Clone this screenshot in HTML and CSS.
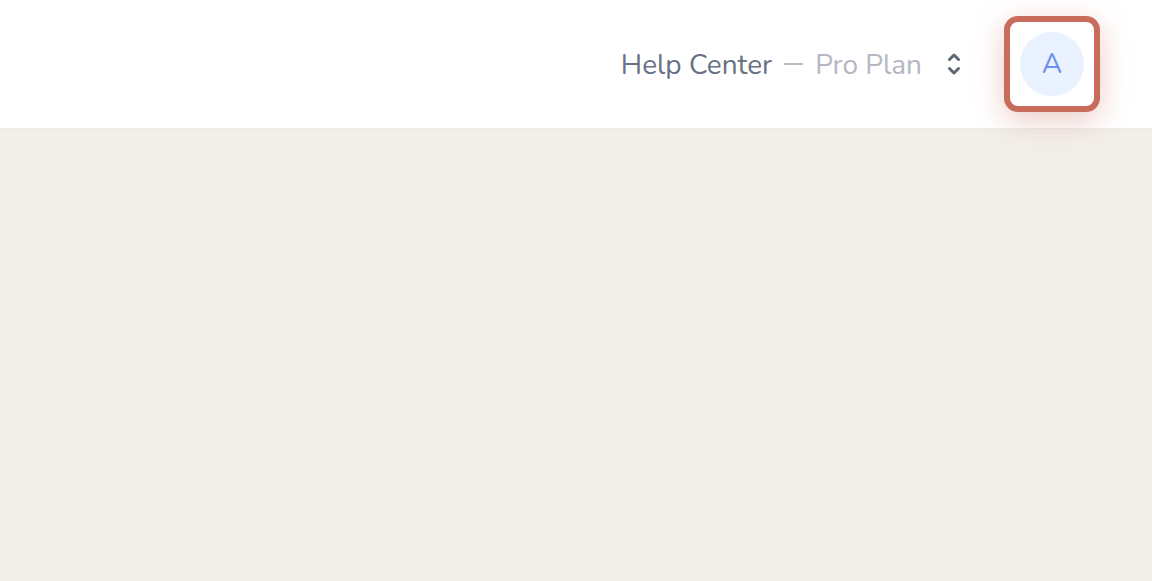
FILE: index.html
```html
<!DOCTYPE html>
<html>
<head>
    <meta charset="utf-8">
    <meta name="viewport" content="width=device-width, initial-scale=1">
    <title>Workspace</title>
    <link rel="stylesheet" href="styles.css">
</head>
<body>
    <header class="topbar">
        <div class="topdiv">
            <div class="workspace">
                <span class="ws-name">Help Center</span>
                <span class="ws-dash"></span>
                <span class="ws-plan">Pro Plan</span>
                <svg class="ws-switch" width="16" height="26" viewBox="0 0 16 26" fill="none" stroke="#5f6675" stroke-width="3" stroke-linecap="round" stroke-linejoin="round">
                    <path d="M3.5 8.5 L8 4 L12.5 8.5"/>
                    <path d="M3.5 17.5 L8 22 L12.5 17.5"/>
                </svg>
            </div>
            <button class="avatar-btn">
                <span class="avatar">A</span>
            </button>
        </div>
    </header>

    <!-- main content -->
    <div class="content"></div>
</body>
</html>
```

FILE: styles.css
```css
* {
    box-sizing: border-box;
}
html, body {
    height: 100%;
}
body {
    margin: 0;
    background: #f2efe8;
    font-family: "Nunito", "Lato", "Noto Sans", sans-serif;
}
.topbar {
    background: white;
    height: 129px;
    border-bottom: 1px solid #e9ecef;
    padding-right: 52px;
}
.topdiv {
    display: flex;
    align-items: center;
    justify-content: flex-end;
    height: 128px;
}
.workspace {
    display: flex;
    align-items: center;
    font-size: 28px;
    margin-top: 2px;
    margin-right: 42px;
}
.ws-name {
    color: #687183;
}
.ws-dash {
    width: 19px;
    height: 2px;
    background: #b7bcc6;
    margin: -2px 12px 0 12px;
}
.ws-plan {
    color: #b3b8c2;
}
.ws-switch {
    margin-left: 24px;
    margin-top: -2px;
}
.avatar-btn {
    width: 96px;
    height: 96px;
    padding: 0;
    border: 6px solid #c86c5c;
    border-radius: 14px;
    background: white;
    display: flex;
    align-items: center;
    justify-content: center;
    box-shadow: 0 8px 30px rgba(200, 108, 92, 0.35);
}
.avatar {
    width: 64px;
    height: 64px;
    border-radius: 50%;
    background: #eaf2ff;
    color: #6e8ff2;
    font-family: "Nunito", "Lato", "Noto Sans", sans-serif;
    font-size: 28px;
    display: flex;
    align-items: center;
    justify-content: center;
}
.content {
    height: 452px;
}
```
